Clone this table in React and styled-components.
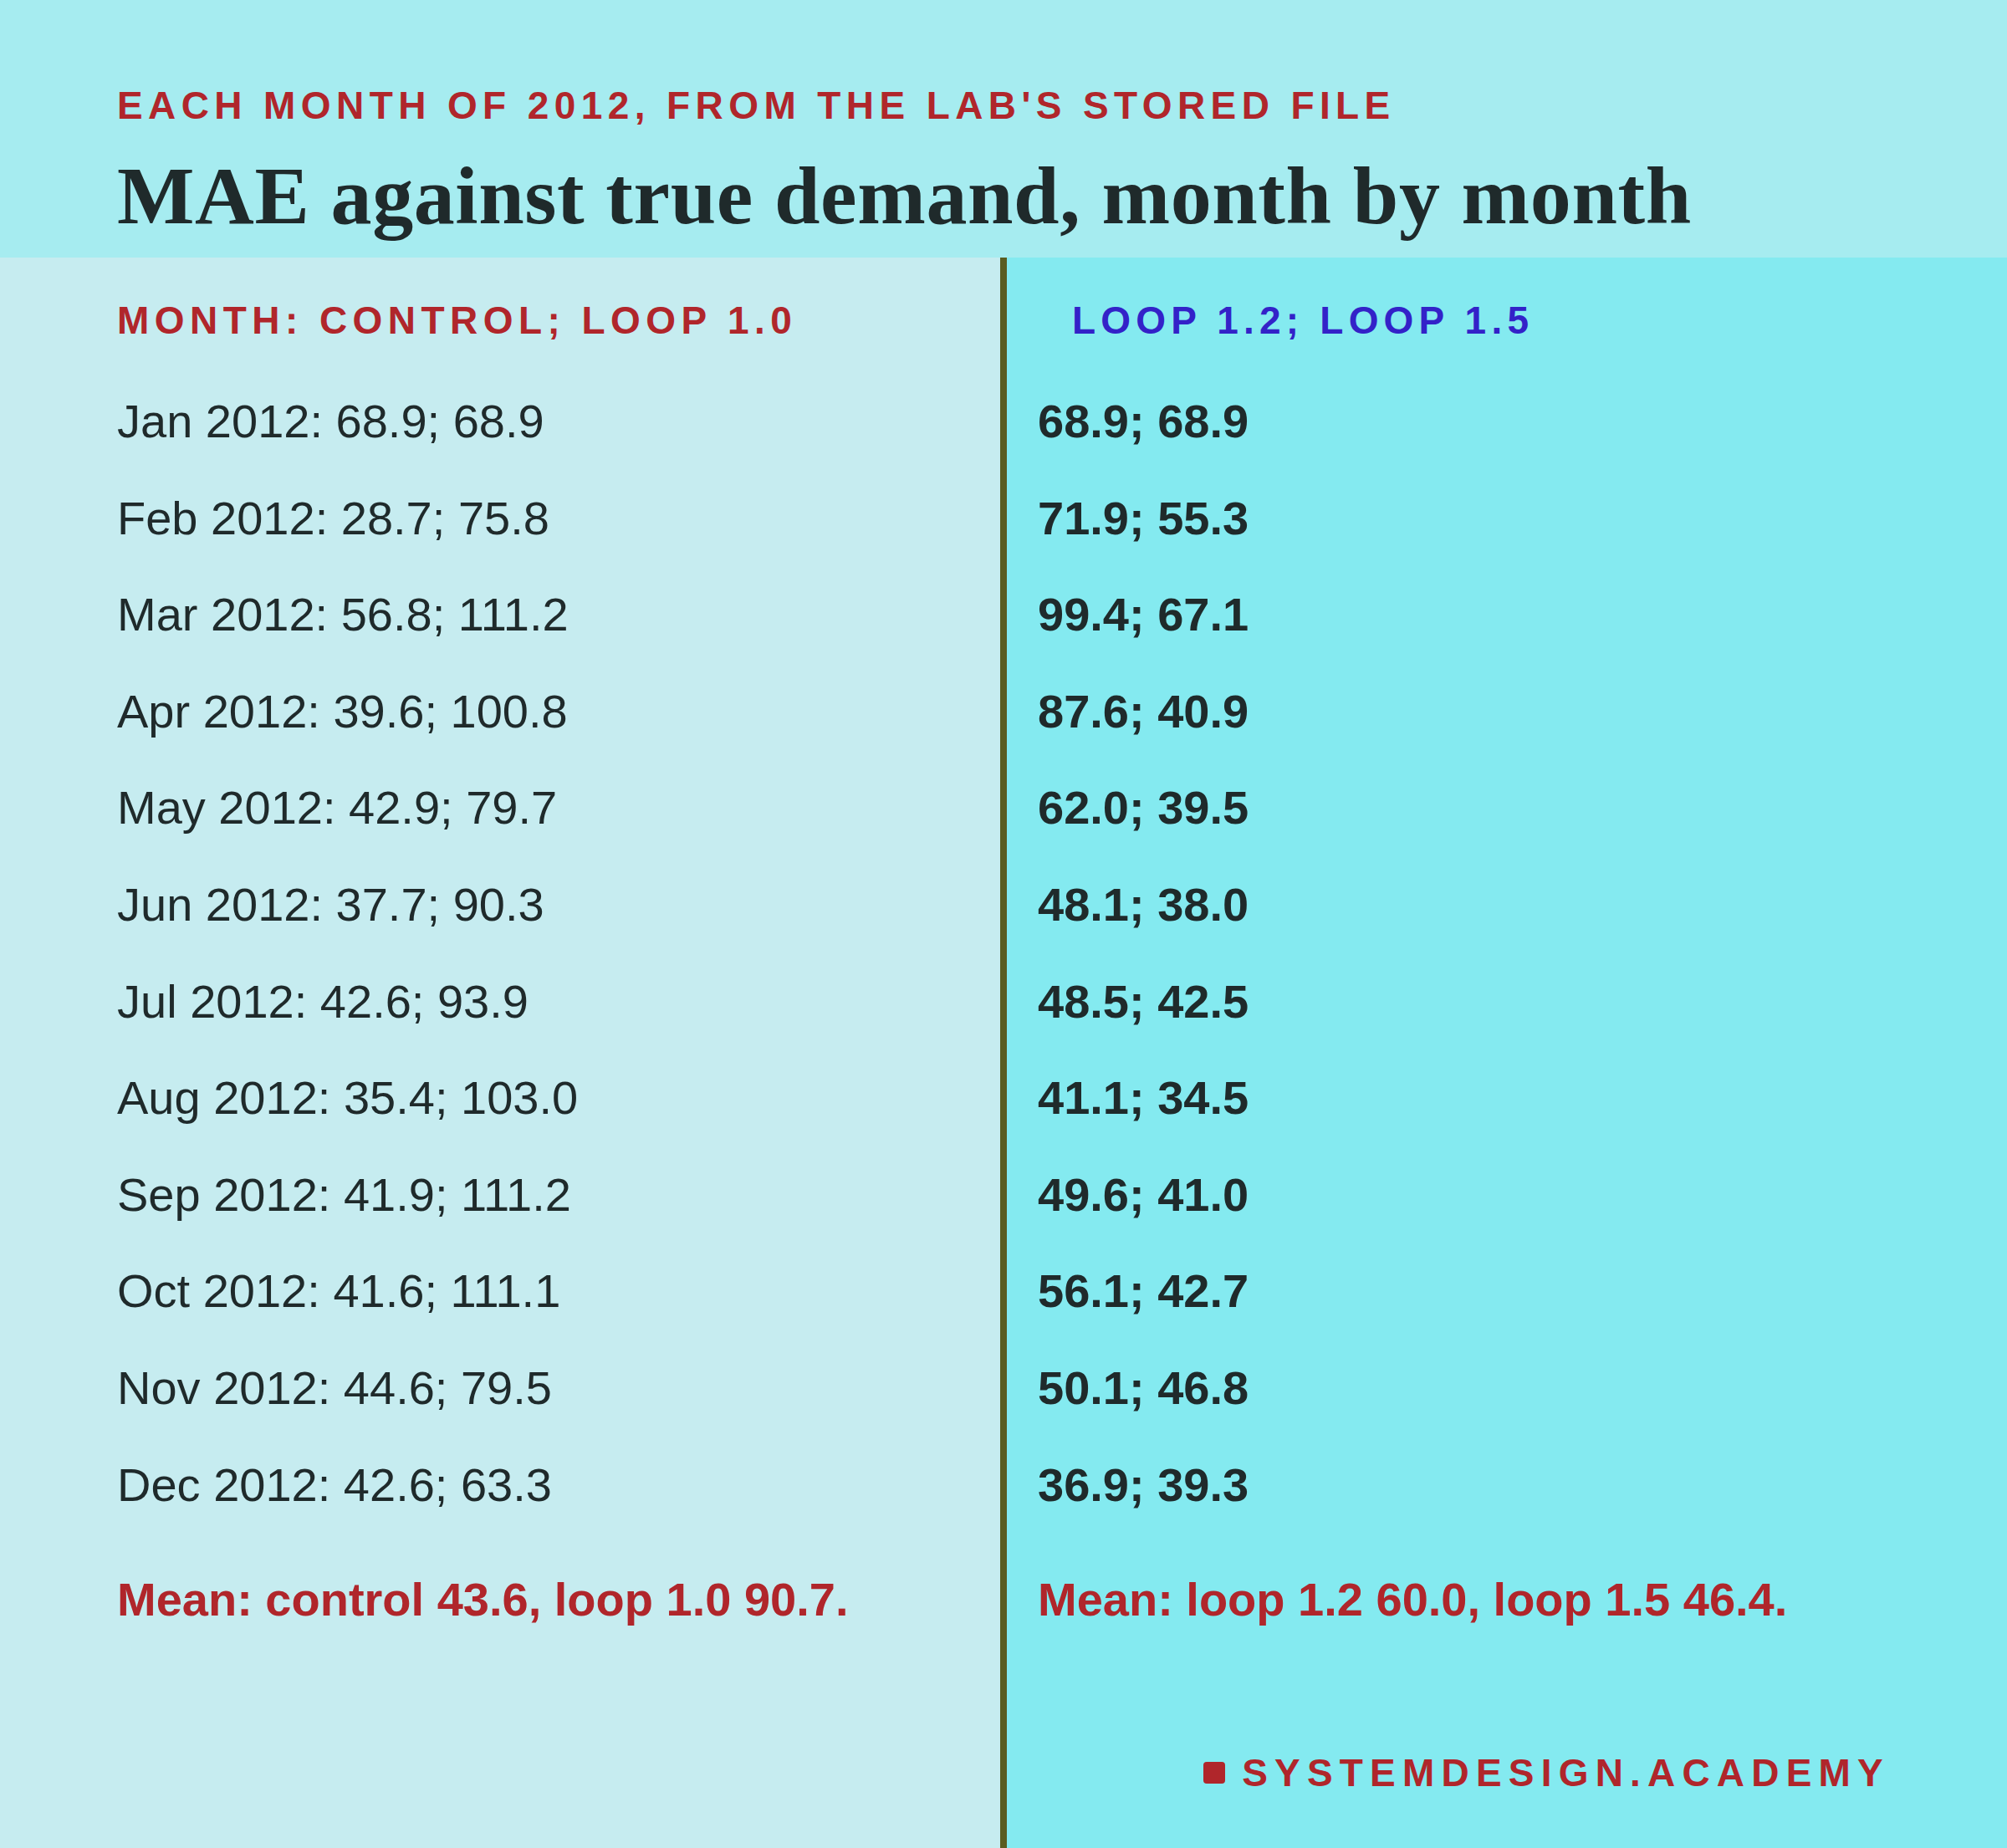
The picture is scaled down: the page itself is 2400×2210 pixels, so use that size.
import React from "react";
import styled, { createGlobalStyle } from "styled-components";

const Global = createGlobalStyle`
  html, body { margin: 0; padding: 0; }
  body {
    width: 2400px;
    font-family: "Liberation Sans", Arial, Helvetica, sans-serif;
    color: #1f2a2b;
  }
`;

const Page = styled.div`
  width: 2400px;
  height: 2210px;
  display: flex;
  flex-direction: column;
  overflow: hidden;
`;

const Header = styled.header`
  box-sizing: border-box;
  height: 308px;
  padding: 103px 140px 0 140px;
  background: #a6ecf0;
  display: flex;
  flex-direction: column;
  gap: 36px;
`;

const Eyebrow = styled.div`
  font-family: "Liberation Sans", Arial, sans-serif;
  font-weight: 700;
  font-size: 46px;
  line-height: 1;
  letter-spacing: 6.4px;
  color: #b0262b;
  text-transform: uppercase;
  white-space: nowrap;
`;

const Title = styled.h1`
  margin: 0;
  font-family: "Liberation Serif", "Times New Roman", serif;
  font-weight: 700;
  font-size: 98px;
  line-height: 1;
  letter-spacing: 0.6px;
  color: #1f2a2b;
  white-space: nowrap;
`;

const Columns = styled.main`
  flex: 1;
  display: grid;
  grid-template-columns: 1196px 1fr;
`;

const Column = styled.section`
  box-sizing: border-box;
  display: flex;
  flex-direction: column;
  padding: 52px 0 67px ${(p) => (p.$right ? "37px" : "140px")};
  background: ${(p) => (p.$right ? "#84eaf0" : "#c6ecf0")};
  border-left: ${(p) => (p.$right ? "8px solid #5a5c20" : "none")};
`;

const ColLabel = styled.div`
  font-weight: 700;
  font-size: 46px;
  line-height: 1;
  letter-spacing: ${(p) => (p.$blue ? "6.2px" : "6.45px")};
  color: ${(p) => (p.$blue ? "#3322c8" : "#b0262b")};
  padding-left: ${(p) => (p.$blue ? "41px" : "0")};
  margin-bottom: 40px;
  white-space: nowrap;
`;

const Row = styled.div`
  font-size: 56px;
  line-height: 115.6px;
  font-weight: ${(p) => (p.$bold ? 700 : 400)};
  color: #1f2a2b;
  white-space: nowrap;
`;

const Mean = styled.div`
  margin-top: 22px;
  font-size: 56px;
  line-height: 115.6px;
  font-weight: 700;
  color: #b0262b;
  white-space: nowrap;
`;

const Footer = styled.div`
  margin-top: auto;
  display: flex;
  align-items: center;
  justify-content: flex-end;
  gap: 20px;
  padding-right: 140px;
`;

const Mark = styled.span`
  width: 26px;
  height: 26px;
  border-radius: 4px;
  background: #b0262b;
  flex: none;
`;

const Brand = styled.span`
  font-weight: 700;
  font-size: 46px;
  line-height: 1;
  letter-spacing: 8.2px;
  color: #b0262b;
`;

const data = [
  ["Jan 2012", "68.9; 68.9", "68.9; 68.9"],
  ["Feb 2012", "28.7; 75.8", "71.9; 55.3"],
  ["Mar 2012", "56.8; 111.2", "99.4; 67.1"],
  ["Apr 2012", "39.6; 100.8", "87.6; 40.9"],
  ["May 2012", "42.9; 79.7", "62.0; 39.5"],
  ["Jun 2012", "37.7; 90.3", "48.1; 38.0"],
  ["Jul 2012", "42.6; 93.9", "48.5; 42.5"],
  ["Aug 2012", "35.4; 103.0", "41.1; 34.5"],
  ["Sep 2012", "41.9; 111.2", "49.6; 41.0"],
  ["Oct 2012", "41.6; 111.1", "56.1; 42.7"],
  ["Nov 2012", "44.6; 79.5", "50.1; 46.8"],
  ["Dec 2012", "42.6; 63.3", "36.9; 39.3"],
];

export default function App() {
  return (
    <Page>
      <Global />
      <Header>
        <Eyebrow>Each month of 2012, from the lab's stored file</Eyebrow>
        <Title>MAE against true demand, month by month</Title>
      </Header>
      <Columns>
        <Column>
          <ColLabel>MONTH: CONTROL; LOOP 1.0</ColLabel>
          {data.map(([m, a]) => (
            <Row key={m}>
              {m}: {a}
            </Row>
          ))}
          <Mean>Mean: control 43.6, loop 1.0 90.7.</Mean>
        </Column>
        <Column $right>
          <ColLabel $blue>LOOP 1.2; LOOP 1.5</ColLabel>
          {data.map(([m, , b]) => (
            <Row key={m} $bold>
              {b}
            </Row>
          ))}
          <Mean>Mean: loop 1.2 60.0, loop 1.5 46.4.</Mean>
          <Footer>
            <Mark />
            <Brand>SYSTEMDESIGN.ACADEMY</Brand>
          </Footer>
        </Column>
      </Columns>
    </Page>
  );
}
